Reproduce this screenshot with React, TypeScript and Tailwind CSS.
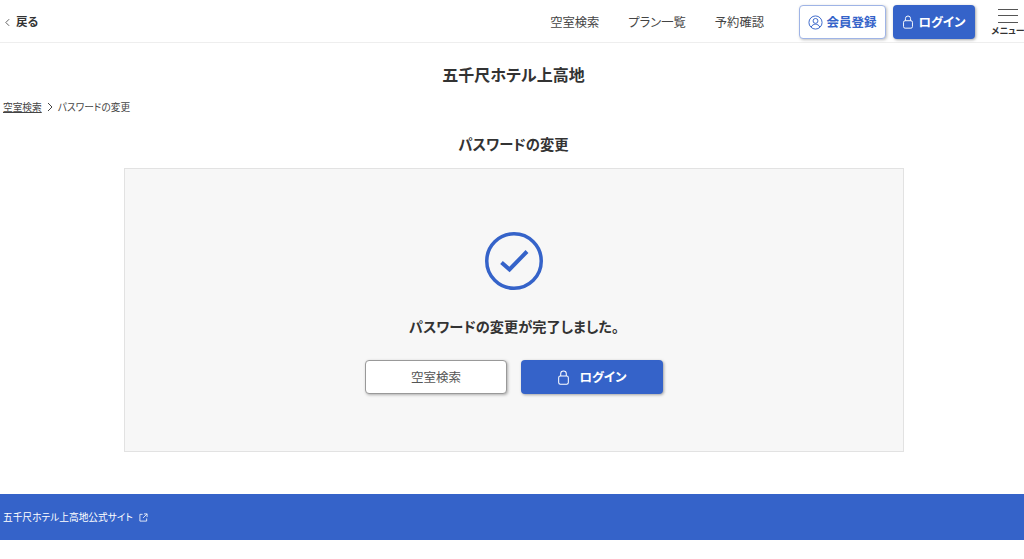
const F = "font-['Noto_Sans_CJK_JP','Noto_Sans',sans-serif] [font-feature-settings:'palt']";

function Lock({ className }: { className: string }) {
  return (
    <svg viewBox="0 0 14 16" fill="none" stroke="currentColor" strokeWidth="1.1" className={className}>
      <rect x="1.8" y="6.5" width="10.4" height="8.7" rx="1.8" />
      <path d="M4 6.5V4a3 3 0 0 1 6 0v2.5" />
    </svg>
  );
}

export default function App() {
  return (
    <div className={`${F} h-[559px] w-[1024px] overflow-hidden bg-white text-[#333]`}>
      <header className="flex h-[43px] items-center border-b border-[#eeeeee] bg-white pt-[2px]">
        <a className="ml-[5px] flex items-center gap-[6px] text-[11.500px] font-bold">
          <svg viewBox="0 0 6 10" className="h-[9px] w-[5px]" fill="none" stroke="#444" strokeWidth="1">
            <path d="M5 1 1 5l4 4" />
          </svg>
          戻る
        </a>
        <nav className="ml-auto flex items-center text-[12.300px] text-[#444]">
          <a className="mr-[29px]">空室検索</a>
          <a className="mr-[29px]">プラン一覧</a>
          <a className="mr-[35px]">予約確認</a>
        </nav>
        <a className="flex h-[34px] w-[87px] items-center justify-center gap-[3px] rounded-[4px] border border-[#9fb4e6] bg-white text-[12.500px] font-bold text-[#3563c9] shadow-[1px_1px_3px_rgba(0,0,0,0.25)]">
          <svg viewBox="0 0 16 16" fill="none" stroke="currentColor" strokeWidth="1" className="h-[15px] w-[15px]">
            <circle cx="8" cy="8" r="7" />
            <circle cx="8" cy="6.3" r="2.6" />
            <path d="M3.4 12.8c1-2 2.7-3 4.6-3s3.600 1 4.600 3" />
          </svg>
          会員登録
        </a>
        <a className="ml-[7px] flex h-[34px] w-[82px] items-center justify-center gap-[4px] rounded-[4px] bg-[#3563c9] text-[12.500px] font-bold text-white shadow-[1px_1px_3px_rgba(0,0,0,0.35)]">
          <Lock className="h-[14px] w-[12px]" />
          ログイン
        </a>
        <button className="ml-[17px] flex w-[32px] flex-col items-center">
          <span className="block h-px w-[20px] bg-[#555]" />
          <span className="mt-[5.500px] block h-px w-[20px] bg-[#555]" />
          <span className="mt-[5.500px] block h-px w-[20px] bg-[#555]" />
          <span className="mt-[2px] whitespace-nowrap text-[9px] leading-[11px] font-bold text-[#333]">メニュー</span>
        </button>
      </header>

      <h1 className="mt-[20px] ml-[3px] text-center text-[16px] leading-[22px] font-bold">五千尺ホテル上高地</h1>

      <div className="mt-[15px] ml-[3px] flex items-center text-[9.700px] leading-[14px] text-[#444]">
        <a className="underline">空室検索</a>
        <svg viewBox="0 0 6 10" className="mx-[5px] h-[10px] w-[6px]" fill="none" stroke="#444" strokeWidth="1">
          <path d="m1 1 4 4-4 4" />
        </svg>
        パスワードの変更
      </div>

      <h2 className="mt-[20px] ml-[3px] text-center text-[14.300px] leading-[20px] font-bold">パスワードの変更</h2>

      <section className="mt-[14px] ml-[124px] flex h-[284px] w-[780px] flex-col items-center border border-[#e2e2e2] bg-[#f7f7f7] pt-[63px]">
        <svg viewBox="0 0 58 58" fill="none" stroke="#3563c9" className="h-[58px] w-[58px]">
          <circle cx="29" cy="29" r="27.250" strokeWidth="3.500" />
          <path d="M16.500 30.500 24.500 37.500 42 19.500" strokeWidth="4" />
        </svg>
        <p className="mt-[26px] text-[14.200px] leading-[20px] font-bold">パスワードの変更が完了しました。</p>
        <div className="mt-[24px] flex gap-[14px]">
          <a className="flex h-[34px] w-[142px] items-center justify-center rounded-[4px] border border-[#999] bg-white text-[12.500px] text-[#555] shadow-[1px_1px_3px_rgba(0,0,0,0.3)]">
            空室検索
          </a>
          <a className="flex h-[34px] w-[142px] items-center justify-center gap-[9px] rounded-[4px] bg-[#3563c9] text-[12.500px] font-bold text-white shadow-[1px_1px_3px_rgba(0,0,0,0.35)]">
            <Lock className="h-[15px] w-[13px]" />
            ログイン
          </a>
        </div>
      </section>

      <footer className="mt-[42px] flex h-[46px] items-center bg-[#3563c9] pl-[3px] text-[9.700px] text-white">
        五千尺ホテル上高地公式サイト
        <svg viewBox="0 0 10 10" fill="none" stroke="currentColor" strokeWidth="0.9" className="ml-[6px] h-[9px] w-[9px]">
          <path d="M4 1.500H1v7.500h7.500V6M5.500 1h3.500v3.500M9 1 4.500 5.500" />
        </svg>
      </footer>
    </div>
  );
}
